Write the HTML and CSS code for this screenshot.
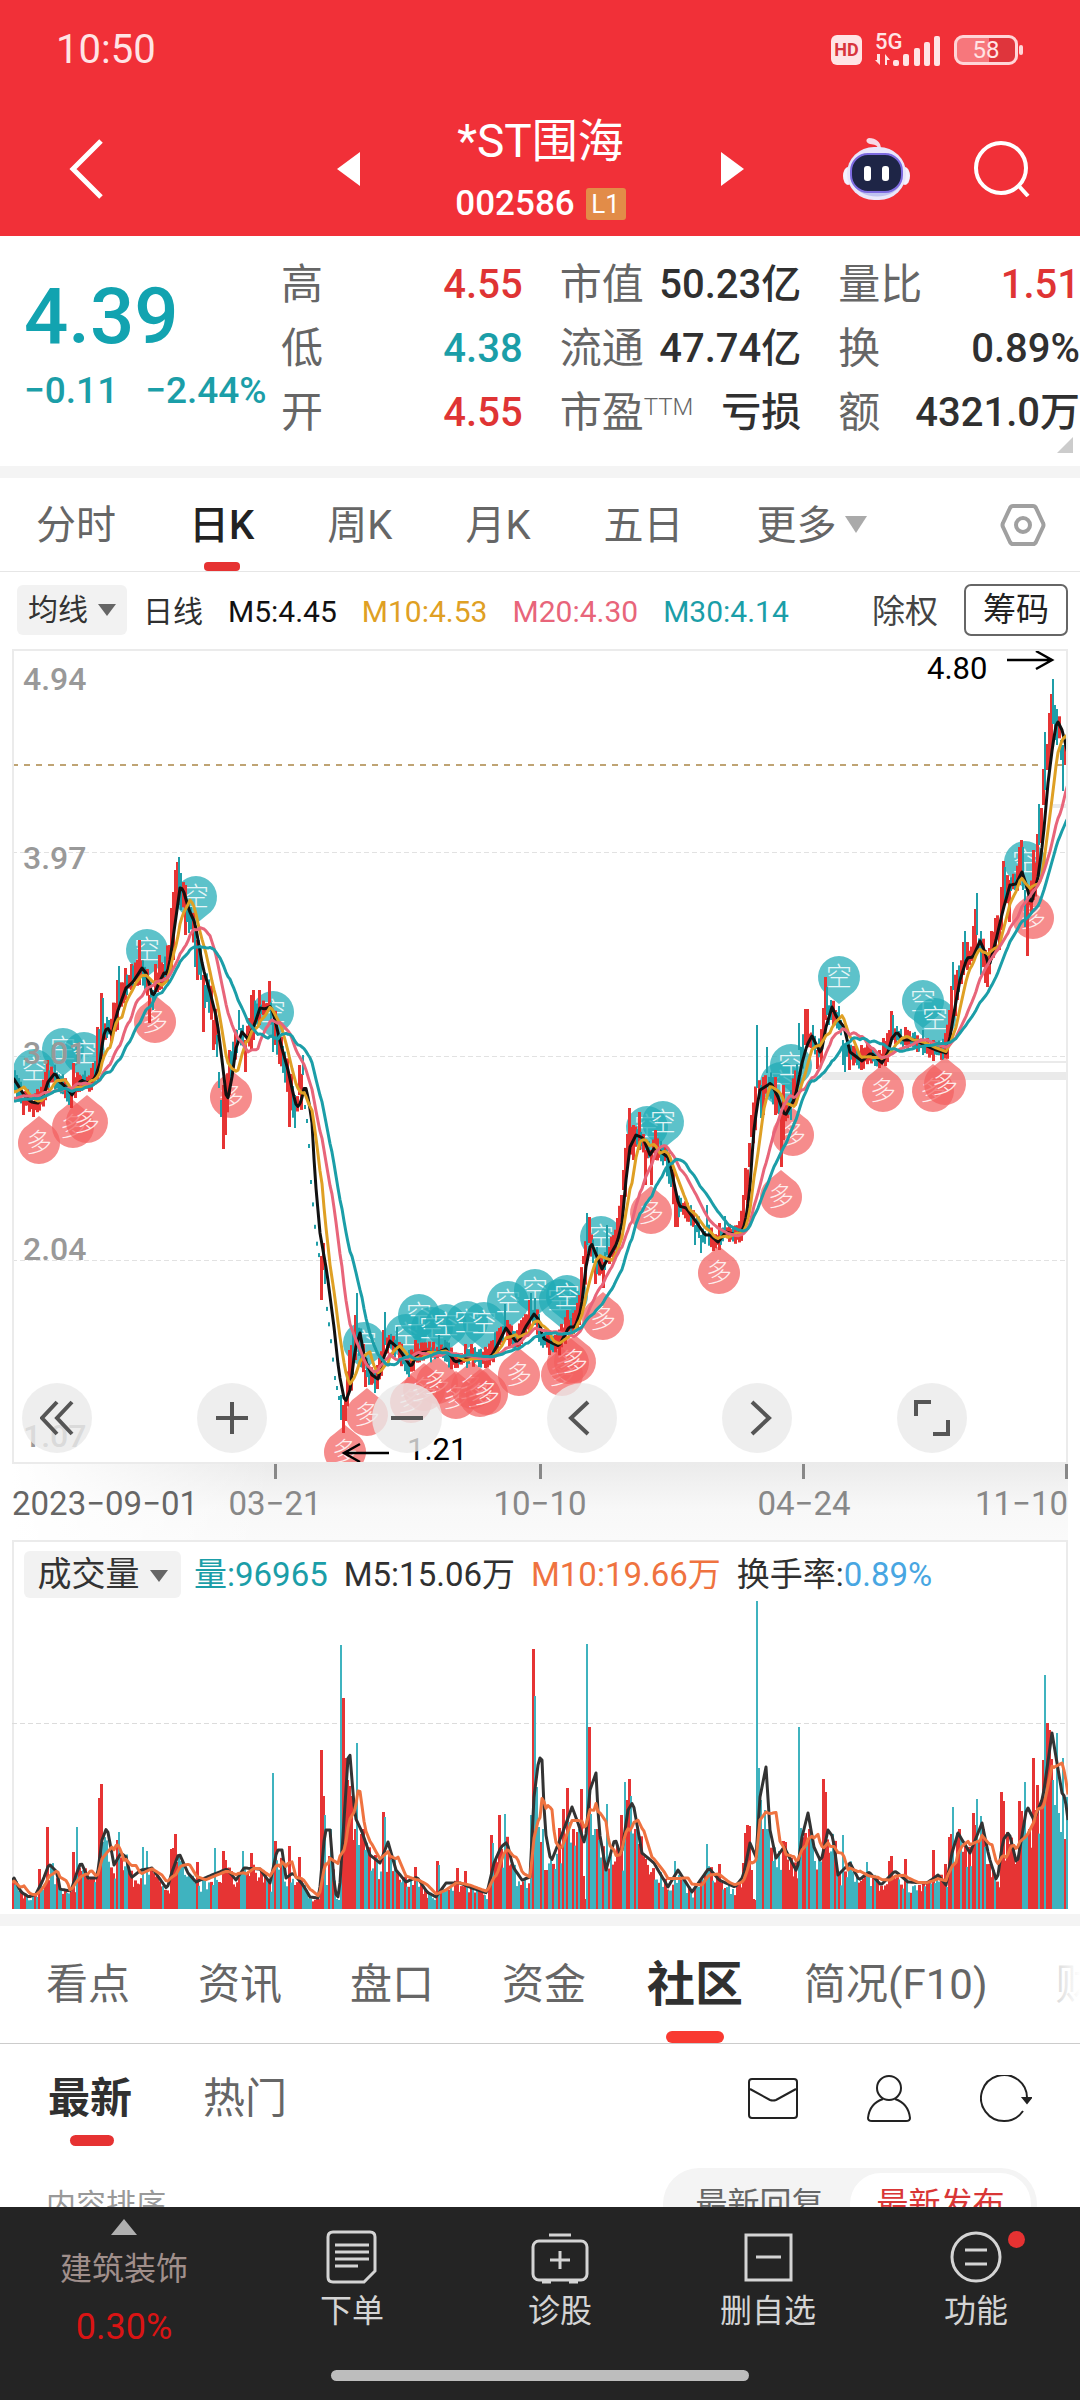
FILE: index.html
```html
<!DOCTYPE html>
<html lang="zh-CN">
<head>
<meta charset="utf-8">
<meta name="viewport" content="width=device-width, initial-scale=1">
<title>*ST围海 002586</title>
<link rel="stylesheet" href="styles.css">
</head>
<body>
<div class="app">
  <header class="top">
    <div class="status">
      <span class="clock">10:50</span>
      <span class="status-icons">
        <span class="hd">HD</span>
        <span class="cell">
          <span class="cell-gen">5G</span>
          <svg width="66" height="34" viewBox="0 0 66 34" aria-hidden="true">
            <g fill="#ffe4e5"><path d="M2 21h3v11l-5-5h2zM10 32V21l5 6h-3v5z"/><rect x="18" y="27" width="6" height="6" rx="2"/><rect x="28" y="21" width="6" height="12" rx="2"/><rect x="39" y="15" width="6" height="18" rx="2"/><rect x="49" y="9" width="6" height="24" rx="2"/><rect x="59" y="3" width="6" height="30" rx="2"/></g>
          </svg>
        </span>
        <span class="battery">58</span>
      </span>
    </div>
    <div class="titlebar">
      <div class="title-left">
        <button class="icon-btn" aria-label="返回"><svg width="36" height="62" viewBox="0 0 36 62"><path d="M32 3 4 31l28 28" fill="none" stroke="#fff" stroke-width="5"/></svg></button>
      </div>
      <div class="title-mid">
        <button class="icon-btn" aria-label="上一只"><svg width="23" height="34" viewBox="0 0 23 34"><path d="M23 0v34L0 17z" fill="#fff"/></svg></button>
        <div class="names">
          <h1 class="name">*ST围海</h1>
          <div class="code">002586 <span class="level">L1</span></div>
        </div>
        <button class="icon-btn" aria-label="下一只"><svg width="23" height="34" viewBox="0 0 23 34"><path d="M0 0v34l23-17z" fill="#fff"/></svg></button>
      </div>
      <div class="title-right">
        <button class="icon-btn" aria-label="智能助手"><svg width="67" height="62" viewBox="0 0 67 62">
          <path d="M35 12c0-6-4-5-8-6-4-1-5-5-1-6 7 0 12 4 12 11z" fill="#f7d9e6"/>
          <ellipse cx="5" cy="38" rx="5" ry="9" fill="#f4f1ff"/><ellipse cx="62" cy="38" rx="5" ry="9" fill="#f4f1ff"/>
          <rect x="4" y="9" width="59" height="53" rx="27" fill="#e9e6fb"/>
          <path d="M9 42c4 22 46 22 50 0-6 12-44 12-50 0z" fill="#bfc3f0"/>
          <rect x="8" y="16" width="51" height="38" rx="17" fill="#1e2546" stroke="#7d6be0" stroke-width="2"/>
          <rect x="21" y="28" width="7" height="15" rx="3" fill="#fff"/><rect x="39" y="28" width="7" height="15" rx="3" fill="#fff"/>
        </svg></button>
        <button class="icon-btn" aria-label="搜索"><svg width="56" height="56" viewBox="0 0 56 56"><circle cx="27" cy="27" r="25" fill="none" stroke="#fff" stroke-width="4"/><path d="m44 44 10 11" stroke="#fff" stroke-width="4"/></svg></button>
      </div>
    </div>
  </header>

  <main class="content">
    <section class="quote">
      <div class="price-block">
        <div class="price">4.39</div>
        <div class="change"><span>−0.11</span><span>−2.44%</span></div>
      </div>
      <dl class="stats">
        <div class="stat"><dt>高</dt><dd class="up">4.55</dd></div>
        <div class="stat"><dt>市值</dt><dd>50.23亿</dd></div>
        <div class="stat"><dt>量比</dt><dd class="up">1.51</dd></div>
        <div class="stat"><dt>低</dt><dd class="down">4.38</dd></div>
        <div class="stat"><dt>流通</dt><dd>47.74亿</dd></div>
        <div class="stat"><dt>换</dt><dd>0.89%</dd></div>
        <div class="stat"><dt>开</dt><dd class="up">4.55</dd></div>
        <div class="stat"><dt>市盈<sup>TTM</sup></dt><dd>亏损</dd></div>
        <div class="stat"><dt>额</dt><dd>4321.0万</dd></div>
      </dl>
      <span class="corner"></span>
    </section>

    <nav class="periods">
      <button class="period">分时</button>
      <button class="period active">日K</button>
      <button class="period">周K</button>
      <button class="period">月K</button>
      <button class="period">五日</button>
      <button class="period more">更多<span class="caret wide"></span></button>
      <button class="icon-btn gear" aria-label="设置"><svg width="46" height="44" viewBox="0 0 46 44"><path d="M13 3h20q2 0 3 2l7 15q1 2 0 4l-7 15q-1 2-3 2H13q-2 0-3-2L3 24q-1-2 0-4l7-15q1-2 3-2z" fill="none" stroke="#a0a0a0" stroke-width="4"/><circle cx="23" cy="22" r="7" fill="none" stroke="#a0a0a0" stroke-width="4"/></svg></button>
    </nav>

    <section class="indicators">
      <button class="chip">均线<span class="caret"></span></button>
      <div class="averages">
        <span class="day">日线</span>
        <span class="m5">M5:4.45</span>
        <span class="m10">M10:4.53</span>
        <span class="m20">M20:4.30</span>
        <span class="m30">M30:4.14</span>
      </div>
      <button class="plain">除权</button>
      <button class="boxed">筹码</button>
    </section>

    <section class="kline">
      <svg class="plot" id="kline" viewBox="12 649 1056 891" role="img" aria-label="日K线图">
        <defs>
          <linearGradient id="axisDown" x1="0" y1="0" x2="0" y2="1"><stop offset="0" stop-color="#ebebeb"/><stop offset="0.6" stop-color="#f8f8f8"/><stop offset="1" stop-color="#fafafa"/></linearGradient>
          <linearGradient id="axisLeft" x1="0" y1="0" x2="1" y2="0"><stop offset="0" stop-color="#fff"/><stop offset="1" stop-color="#fff" stop-opacity="0"/></linearGradient>
          <clipPath id="frame"><rect x="12" y="649" width="1056" height="815"/></clipPath>
        </defs>
      </svg>
      <div class="zoom-bar">
        <button class="round" aria-label="最早"><svg width="34" height="36" viewBox="0 0 34 36"><path d="M17 2 2 18l15 16M32 2 17 18l15 16"/></svg></button>
        <button class="round" aria-label="放大"><svg width="34" height="36" viewBox="0 0 34 36"><path d="M17 2v32M1 18h32"/></svg></button>
        <button class="round" aria-label="缩小"><svg width="34" height="36" viewBox="0 0 34 36"><path d="M1 18h32"/></svg></button>
        <button class="round" aria-label="向左"><svg width="34" height="36" viewBox="0 0 34 36"><path d="M23 2 6 18l17 16"/></svg></button>
        <button class="round" aria-label="向右"><svg width="34" height="36" viewBox="0 0 34 36"><path d="m12 2 17 16-17 16"/></svg></button>
        <button class="round" aria-label="全屏"><svg width="40" height="38" viewBox="0 0 40 38"><path d="M4 17V3h15M36 21v14H21"/></svg></button>
      </div>
    </section>

    <section class="volume">
      <div class="volume-head">
        <button class="chip chip-vol">成交量<span class="caret"></span></button>
        <div class="volume-values">
          <span class="down">量:96965</span>
          <span>M5:15.06万</span>
          <span class="orange">M10:19.66万</span>
          <span>换手率:<span class="blue">0.89%</span></span>
        </div>
      </div>
      <svg class="plot" id="volume" viewBox="12 1600 1056 309" role="img" aria-label="成交量"></svg>
    </section>

    <nav class="tabs">
      <button class="tab">看点</button>
      <button class="tab">资讯</button>
      <button class="tab">盘口</button>
      <button class="tab">资金</button>
      <button class="tab active">社区</button>
      <button class="tab">简况(F10)</button>
      <button class="tab">财务</button>
    </nav>

    <section class="feed-head">
      <button class="feed active">最新</button>
      <button class="feed">热门</button>
      <div class="feed-icons">
        <button class="icon-btn" aria-label="消息"><svg width="50" height="42" viewBox="0 0 50 42"><rect x="1" y="1" width="48" height="39" rx="3"/><path d="m2 11 20 11q3 1 6 0l20-11"/></svg></button>
        <button class="icon-btn" aria-label="我的"><svg width="44" height="48" viewBox="0 0 44 48"><circle cx="22" cy="13" r="12"/><path d="M16 24C7 27 2 34 1 43q0 3 4 3h34q4 0 4-3c-1-9-6-16-15-19"/></svg></button>
        <button class="icon-btn" aria-label="刷新"><svg width="52" height="48" viewBox="0 0 52 48"><path d="M43 36A23 23 0 1 1 47 24"/><path d="M43 23h8l-4 5z" fill="#222"/></svg></button>
      </div>
    </section>

    <section class="sorter">
      <span class="sort-label">内容排序</span>
      <div class="switch">
        <button class="option">最新回复</button>
        <button class="option chosen">最新发布</button>
      </div>
    </section>
  </main>

  <footer class="dock">
    <div class="dock-row">
      <a class="sector" href="#">
        <svg width="26" height="16" viewBox="0 0 26 16" aria-hidden="true"><path d="M13 0l13 16H0z" fill="#b0b0b0"/></svg>
        <span class="sector-name">建筑装饰</span>
        <span class="sector-change">0.30%</span>
      </a>
      <button class="dock-item"><svg width="54" height="54" viewBox="0 0 54 54"><path d="M8 2h37q5 0 5 5v34L39 52H8q-5 0-5-5V7q0-5 5-5z"/><path d="M10 15h34M10 22h34M10 29h34M10 36h23"/></svg><span>下单</span></button>
      <button class="dock-item"><svg width="60" height="54" viewBox="0 0 60 54"><rect x="3" y="11" width="54" height="39" rx="6"/><path d="M19 5h22M30 21v18M20 30h20M12 52h9M39 52h9"/></svg><span>诊股</span></button>
      <button class="dock-item"><svg width="54" height="54" viewBox="0 0 54 54"><rect x="5" y="5" width="45" height="45"/><path d="M15 27h25"/></svg><span>删自选</span></button>
      <button class="dock-item"><svg width="54" height="54" viewBox="0 0 54 54"><circle cx="27" cy="27" r="24"/><path d="M16 20h22M16 34h22"/></svg><span>功能</span><i class="dot"></i></button>
    </div>
    <div class="home"></div>
  </footer>
</div>
<script src="charts.js"></script>
</body>
</html>
```
FILE: styles.css
```css
* { box-sizing: border-box; }

body {
  margin: 0;
  font-family: Roboto, "Noto Sans CJK SC", sans-serif;
  color: #303030;
  background: #fff;
}

button {
  margin: 0;
  padding: 0;
  border: 0;
  background: none;
  font: inherit;
  color: inherit;
  white-space: nowrap;
}

svg { display: block; }
.icon-btn { flex: none; }

.app { display: flex; flex-direction: column; height: 100vh; }
.content { flex: 1; min-height: 0; overflow: hidden; }
.up { color: #df3434; }
.down { color: #1b9ea8; }
.orange { color: #ef7340; }
.blue { color: #48a6e2; }

/* header */
.top { background: #f13038; color: #fff; }
.status {
  display: flex;
  align-items: center;
  justify-content: space-between;
  padding: 30px 57px 0 56px;
  line-height: 40px;
  color: #ffe4e5;
}
.clock { font-size: 40px; }
.status-icons { display: flex; align-items: center; gap: 13px; }
.hd {
  width: 31px;
  border-radius: 6px;
  background: #ffe4e5;
  color: #d8353c;
  font-size: 18px;
  font-weight: 700;
  line-height: 30px;
  text-align: center;
}
.cell { position: relative; }
.cell-gen { position: absolute; left: 0; top: 0; font-size: 22px; font-weight: 500; line-height: 17px; }
.battery {
  position: relative;
  width: 64px;
  border: 3px solid #ffd5d7;
  border-radius: 9px;
  margin-right: 5px;
  background: linear-gradient(90deg, #f7777c 56%, #df353c 56%);
  font-size: 24px;
  line-height: 24px;
  text-align: center;
}
.battery::after {
  content: "";
  position: absolute;
  right: -8px;
  top: 7px;
  width: 4px;
  height: 10px;
  border-radius: 2px;
  background: #ffd5d7;
}
.titlebar {
  display: grid;
  grid-template-columns: 1fr 408px 1fr;
  align-items: center;
  padding: 43px 50px 12px 69px;
}
.title-left { display: flex; margin-right: 10px; }
.title-mid { display: flex; align-items: center; justify-content: space-between; position: relative; left: -9px; }
.names { text-align: center; }
.name { margin: 0; font-size: 46px; font-weight: 400; line-height: 56px; }
.code {
  display: flex;
  align-items: center;
  justify-content: center;
  gap: 11px;
  margin-top: 15px;
  font-size: 35px;
  font-weight: 500;
  line-height: 40px;
}
.level {
  width: 40px;
  border-radius: 3px;
  background: #e28c48;
  font-size: 26px;
  font-weight: 400;
  line-height: 32px;
  text-align: center;
}
.title-right { display: flex; align-items: center; justify-content: flex-end; gap: 64px; }

/* quote */
.quote { position: relative; display: flex; padding: 17px 0 21px; border-bottom: 12px solid #f4f4f4; }
.price-block { flex: none; width: 281px; padding: 22px 0 0 24px; color: #12a3b0; }
.price { font-size: 78px; font-weight: 500; line-height: 84px; }
.change {
  display: flex;
  gap: 27px;
  margin-top: 12px;
  color: #1b9ea8;
  font-size: 37px;
  font-weight: 500;
  line-height: 40px;
  white-space: nowrap;
}
.stats {
  flex: 1;
  display: grid;
  grid-template-columns: repeat(3, minmax(0, 1fr));
  column-gap: 37px;
  margin: 0;
}
.stat { display: flex; justify-content: space-between; line-height: 64px; white-space: nowrap; }
.stat dt { font-size: 42px; color: #666; }
.stat dd { margin: 0; font-size: 40px; font-weight: 500; }
.stat sup { font-size: 24px; font-weight: 300; line-height: 24px; vertical-align: 12px; }
.corner {
  position: absolute;
  right: 7px;
  bottom: 13px;
  border-left: 16px solid transparent;
  border-bottom: 16px solid #ccc;
}

/* periods */
.periods { display: flex; align-items: center; gap: 73px; padding: 0 34px 0 36px; border-bottom: 1px solid #e6e6e6; }
.period { position: relative; padding: 20px 0 17px; font-size: 40px; line-height: 56px; color: #666; }
.period.active { color: #222; font-weight: 500; }
.period.active::after {
  content: "";
  position: absolute;
  left: 50%;
  bottom: 0;
  width: 36px;
  height: 9px;
  margin-left: -18px;
  border-radius: 4px;
  background: #e63232;
}
.gear { margin-left: auto; }
.caret {
  display: inline-block;
  margin-left: 10px;
  border: 9px solid transparent;
  border-top: 12px solid #666;
  border-bottom: 0;
  vertical-align: 4px;
}
.caret.wide { margin-left: 8px; border-width: 17px 11px 0; border-top-color: #aaa; vertical-align: 6px; }

/* indicators */
.indicators { display: flex; align-items: center; padding: 12px 12px 13px 17px; font-size: 30px; line-height: 50px; }
.chip { width: 110px; border-radius: 6px; background: #f2f2f2; color: #333; font-size: 30px; line-height: 50px; }
.averages { display: flex; flex: 1; gap: 25px; margin-left: 16px; padding-top: 3px; font-size: 30px; white-space: nowrap; line-height: 47px; }
.m5 { color: #111; }
.m10 { color: #dfa024; }
.m20 { color: #e8657a; }
.m30 { color: #1b9ea8; }
.plain { padding-top: 3px; font-size: 33px; line-height: 47px; color: #444; }
.boxed { width: 104px; margin-left: 26px; border: 2px solid #666; border-radius: 7px; font-size: 33px; line-height: 48px; color: #222; }

/* charts */
.kline { position: relative; padding: 0 12px; }
.plot { width: 100%; height: auto; }
.plot text { font-size: 32px; font-weight: 500; fill: #999; }
.plot .date { fill: #888; font-size: 33px; font-weight: 400; }
.plot .date-start { fill: #666; }
.plot .extreme { fill: #000; font-size: 31px; font-weight: 400; }
.plot .mark { fill: #fff; font-size: 26px; font-weight: 300; text-anchor: middle; opacity: 0.85; }
.zoom-bar { position: absolute; left: 22px; bottom: 87px; display: flex; gap: 105px; }
.round {
  display: flex;
  align-items: center;
  justify-content: center;
  width: 70px;
  height: 70px;
  border-radius: 50%;
  background: rgba(234, 234, 234, 0.8);
}
.round path { fill: none; stroke: #555; stroke-width: 4; }

.volume { margin: 0 12px 5px; box-shadow: inset 0 0 0 2px #ebebeb; }
.volume-head { display: flex; align-items: center; padding: 11px 12px 2px; }
.chip-vol { width: 157px; font-size: 34px; line-height: 47px; }
.volume-values { display: flex; gap: 16px; margin-left: 13px; font-size: 33px; line-height: 47px; white-space: nowrap; }

/* tabs */
.tabs {
  position: relative;
  display: flex;
  gap: 68px;
  overflow: hidden;
  padding-left: 46px;
  border-top: 12px solid #f4f4f4;
  border-bottom: 1px solid #ccc;
}
.tab { position: relative; flex: none; padding: 29px 0 28px; font-size: 42px; line-height: 60px; color: #666; }
.tab.active { margin: 0 -7px; font-size: 48px; font-weight: 700; color: #303030; }
.tab.active::after,
.feed.active::after {
  content: "";
  position: absolute;
  left: 50%;
  bottom: 0;
  width: 58px;
  height: 12px;
  margin-left: -29px;
  border-radius: 6px;
  background: #f93a31;
}
.tabs::after {
  content: "";
  position: absolute;
  right: 0;
  top: 0;
  bottom: 0;
  width: 60px;
  background: linear-gradient(90deg, rgba(255, 255, 255, 0.4), #fff);
}

/* feed */
.feed-head { display: flex; align-items: flex-start; gap: 71px; padding: 25px 48px 0; }
.feed { position: relative; padding-bottom: 17px; font-size: 42px; line-height: 60px; color: #666; }
.feed.active { font-weight: 700; color: #303030; }
.feed.active::after { width: 44px; height: 11px; margin-left: -20px; background: #e63232; }
.feed-icons { display: flex; flex: 1; align-items: center; justify-content: flex-end; gap: 69px; height: 60px; }
.feed-icons svg { fill: none; stroke: #222; stroke-width: 2; }
.sorter { display: flex; justify-content: space-between; margin: 22px 43px 0 46px; line-height: 62px; }
.sort-label { padding-top: 6px; font-size: 30px; color: #999; }
.switch { display: flex; padding: 5px 6px; border-radius: 36px; background: #f4f4f4; font-size: 32px; }
.option { width: 181px; border-radius: 31px; color: #666; }
.option.chosen { background: #fff; color: #d93636; }

/* dock */
.dock { flex: none; padding: 12px 0 19px; background: #242424; color: #d4d4d4; }
.dock-row { display: flex; }
.sector {
  display: flex;
  flex-direction: column;
  align-items: center;
  width: 248px;
  font-size: 32px;
  line-height: 40px;
  text-decoration: none;
}
.sector-name { margin-top: 14px; color: #a08f8b; }
.sector-change { margin-top: 18px; color: #da1414; font-size: 36px; }
.dock-item {
  position: relative;
  display: flex;
  flex: 1;
  flex-direction: column;
  align-items: center;
  gap: 7px;
  padding-top: 11px;
  font-size: 32px;
  line-height: 40px;
}
.dock-item svg { fill: none; stroke: #d4d4d4; stroke-width: 3; }
.dot { position: absolute; left: 50%; top: 12px; width: 17px; height: 17px; margin-left: 32px; border-radius: 50%; background: #e63232; }
.home { width: 418px; height: 11px; margin: 23px auto 0; border-radius: 6px; background: #bdbdbd; }
```
FILE: charts.js
```javascript
var NS = "http://www.w3.org/2000/svg";
var LEFT = 12, STEP = 2, COUNT = 528, BASE = 1909;
var UP = "#e63434", DOWN = "#1f9ea8";

// Five-day average price, as x,y pairs
var price = [-60,1108, 5,1104, 14,1079, 24,1095, 31,1102, 38,1103, 43,1097, 48,1082, 55,1073, 60,1082, 67,1088, 72,1095, 81,1080, 88,1083, 95,1078, 100,1063, 103,1037, 107,1027, 112,1035, 117,1013, 126,988, 133,982, 142,968, 146,973, 153,997, 159,983, 164,973, 167,974, 170,960, 176,917, 180,888, 183,889, 189,910, 195,923, 203,968, 210,992, 217,1020, 222,1060, 227,1103, 232,1077, 236,1048, 242,1032, 248,1039, 255,1023, 260,1008, 265,1009, 271,1006, 275,1020, 281,1045, 288,1070, 293,1093, 297,1108, 301,1102, 305,1084, 309,1102, 312,1123, 315,1177, 320,1233, 327,1273, 334,1327, 339,1373, 345,1403, 350,1390, 355,1350, 360,1333, 365,1360, 372,1375, 378,1379, 384,1357, 390,1341, 398,1348, 405,1358, 411,1367, 418,1353, 427,1352, 436,1353, 446,1349, 455,1362, 465,1359, 475,1358, 486,1359, 492,1355, 499,1342, 506,1328, 511,1335, 518,1344, 525,1328, 534,1314, 539,1320, 543,1338, 550,1342, 559,1346, 569,1327, 575,1327, 581,1310, 586,1267, 591,1242, 595,1252, 602,1269, 609,1257, 617,1243, 622,1223, 626,1180, 630,1147, 636,1135, 643,1138, 650,1155, 655,1147, 661,1152, 669,1158, 674,1183, 679,1206, 686,1208, 697,1223, 705,1235, 710,1235, 718,1242, 726,1232, 736,1235, 743,1230, 747,1213, 751,1177, 753,1137, 757,1107, 760,1090, 771,1083, 778,1097, 785,1116, 795,1098, 802,1063, 807,1045, 812,1036, 821,1054, 826,1027, 832,1007, 837,1018, 844,1027, 850,1052, 862,1061, 871,1053, 882,1063, 888,1052, 892,1038, 897,1032, 903,1040, 915,1040, 929,1047, 936,1050, 946,1053, 950,1037, 955,1007, 960,980, 967,958, 973,957, 980,941, 985,952, 989,967, 996,940, 1003,910, 1010,885, 1016,884, 1022,872, 1027,887, 1031,905, 1038,877, 1043,840, 1048,783, 1053,743, 1057,720, 1062,730, 1068,754];

// Wide-range days: x, high, low, 1 for a rise
var candles = [13,1070,1088,0, 23,1100,1115,1, 33,1103,1117,1, 47,1060,1090,1, 69,1085,1105,0, 71,1090,1108,1, 73,1063,1095,1, 97,1027,1080,1, 101,993,1060,1, 103,998,1050,0, 117,980,1030,1, 119,966,1010,0, 125,968,1000,1, 131,964,990,1, 139,940,985,1, 149,995,1023,1, 153,990,1010,0, 155,964,990,1, 159,955,990,1, 169,945,975,1, 171,908,970,1, 173,892,960,1, 175,870,920,1, 177,862,905,1, 179,857,905,0, 181,873,910,0, 185,885,935,1, 189,900,933,0, 195,930,967,0, 197,940,980,1, 203,975,1032,1, 205,985,1008,0, 213,1020,1050,1, 217,1035,1057,0, 219,1072,1088,0, 221,1100,1117,0, 223,1085,1149,1, 225,1080,1135,1, 229,1050,1095,1, 239,1010,1030,0, 245,1040,1072,1, 251,995,1050,1, 253,990,1040,1, 259,990,1025,1, 269,981,1010,1, 273,1020,1052,0, 279,1040,1064,1, 289,1080,1127,1, 295,1095,1128,0, 299,1065,1095,1, 303,1055,1075,0, 321,1256,1300,1, 323,1243,1270,1, 325,1265,1284,0, 341,1395,1420,0, 343,1405,1433,1, 345,1400,1421,1, 349,1350,1390,1, 355,1315,1360,1, 357,1293,1340,0, 365,1370,1387,1, 375,1370,1393,0, 377,1365,1389,1, 385,1312,1345,0, 383,1330,1360,1, 397,1327,1350,0, 408,1350,1377,0, 415,1340,1358,1, 439,1335,1355,0, 465,1344,1362,1, 471,1344,1360,1, 499,1328,1345,1, 505,1304,1330,0, 507,1320,1340,1, 529,1300,1330,1, 531,1293,1320,0, 535,1298,1325,0, 549,1335,1355,1, 567,1310,1330,1, 579,1295,1325,1, 583,1256,1264,1, 587,1213,1245,0, 589,1217,1243,1, 595,1262,1284,1, 602,1262,1288,1, 607,1225,1255,0, 617,1218,1240,1, 621,1195,1225,1, 623,1170,1190,1, 627,1134,1160,1, 629,1108,1150,1, 633,1125,1160,1, 639,1112,1150,1, 645,1150,1185,1, 651,1150,1185,1, 654,1130,1160,1, 670,1160,1187,0, 675,1195,1227,1, 677,1200,1227,1, 695,1225,1245,0, 701,1235,1253,0, 707,1205,1230,0, 713,1235,1251,1, 719,1223,1250,1, 725,1216,1232,0, 743,1195,1225,1, 745,1168,1200,1, 749,1143,1167,1, 751,1115,1137,1, 757,1025,1088,0, 761,1085,1118,0, 763,1077,1115,1, 766,1047,1073,0, 775,1077,1115,1, 781,1115,1167,1, 783,1085,1140,1, 791,1090,1120,0, 799,1023,1050,0, 805,1009,1045,1, 807,1009,1045,1, 813,1025,1050,0, 817,1050,1069,1, 823,1008,1040,1, 825,977,1020,1, 827,987,1015,0, 831,1000,1020,0, 839,1006,1030,0, 843,1040,1065,0, 845,1045,1072,0, 849,1050,1070,1, 861,1045,1070,1, 879,1050,1068,1, 883,1038,1060,1, 889,1030,1050,1, 891,1011,1040,1, 893,1015,1040,0, 905,1027,1045,1, 923,1030,1055,0, 933,1040,1061,1, 949,1010,1045,1, 951,986,1030,1, 953,962,990,0, 957,970,1000,1, 963,942,975,1, 965,931,962,0, 967,942,970,1, 973,926,960,1, 975,909,950,1, 977,893,935,0, 981,931,975,0, 985,950,983,1, 987,962,987,1, 991,931,960,1, 999,922,950,1, 1001,887,930,1, 1003,861,905,1, 1005,867,900,0, 1009,880,922,1, 1019,847,885,1, 1021,840,880,1, 1023,847,890,0, 1025,890,927,0, 1027,900,956,1, 1033,850,900,1, 1037,834,875,1, 1039,804,845,0, 1041,808,843,1, 1043,769,805,1, 1045,732,790,0, 1047,744,770,1, 1049,713,770,1, 1051,694,750,1, 1053,679,724,0, 1055,705,740,0, 1057,709,745,0, 1061,740,760,0, 1063,745,791,0, 1065,745,765,1, 1067,730,765,0];

var shortMarks = [34,1070, 63,1049, 84,1053, 147,950, 196,897, 273,1012, 364,1343, 406,1335, 419,1315, 432,1328, 446,1325, 467,1322, 484,1323, 508,1302, 535,1290, 560,1300, 567,1296, 601,1237, 647,1127, 663,1122, 781,1083, 791,1065, 839,977, 923,1001, 935,1019, 1025,862];
var longMarks = [39,1143, 73,1127, 87,1122, 155,1022, 231,1097, 345,1452, 367,1415, 411,1402, 424,1390, 437,1383, 456,1398, 472,1388, 480,1396, 487,1394, 519,1375, 562,1375, 568,1363, 575,1362, 603,1319, 651,1213, 719,1273, 781,1197, 793,1135, 883,1091, 933,1091, 945,1084, 1033,918];

// Five-day average volume, as x,y pairs
var volume = [-60,1885, 10,1884, 14,1878, 21,1892, 29,1897, 36,1894, 43,1880, 49,1864, 57,1872, 60,1889, 71,1891, 76,1875, 81,1862, 88,1878, 97,1878, 102,1840, 107,1827, 114,1865, 121,1853, 126,1857, 131,1878, 141,1870, 152,1868, 167,1889, 172,1872, 179,1853, 188,1873, 196,1882, 207,1877, 227,1869, 236,1880, 244,1868, 260,1869, 270,1883, 277,1850, 282,1850, 286,1878, 293,1873, 303,1885, 310,1897, 319,1898, 325,1830, 330,1830, 335,1893, 339,1898, 344,1820, 349,1743, 355,1817, 362,1832, 370,1855, 380,1863, 388,1842, 396,1870, 406,1882, 417,1877, 427,1892, 436,1897, 446,1883, 460,1883, 472,1888, 487,1893, 494,1863, 501,1847, 507,1842, 513,1867, 522,1880, 530,1877, 534,1797, 539,1757, 542,1760, 545,1830, 551,1862, 561,1837, 572,1807, 578,1823, 585,1845, 590,1790, 596,1773, 599,1830, 606,1870, 615,1838, 621,1857, 628,1810, 633,1802, 642,1853, 654,1863, 668,1887, 678,1870, 692,1892, 709,1868, 719,1880, 735,1887, 743,1877, 750,1843, 756,1857, 760,1797, 766,1767, 770,1830, 776,1858, 784,1847, 797,1872, 802,1837, 808,1813, 814,1847, 821,1862, 828,1830, 833,1837, 838,1875, 850,1863, 859,1880, 869,1872, 881,1885, 895,1871, 908,1882, 927,1883, 938,1875, 946,1885, 952,1853, 958,1833, 970,1853, 982,1823, 989,1857, 997,1882, 1003,1840, 1009,1832, 1017,1865, 1027,1806, 1034,1820, 1043,1797, 1052,1733, 1062,1793, 1065,1797, 1068,1820];

// Heavy-volume days: x, top, 1 for a rise
var spikes = [39,1869,1, 47,1827,1, 73,1852,1, 77,1827,0, 99,1798,1, 101,1784,1, 103,1842,0, 117,1840,1, 119,1832,0, 143,1847,0, 147,1851,0, 171,1849,1, 173,1848,1, 175,1834,1, 177,1862,1, 197,1862,1, 215,1848,0, 223,1851,1, 225,1860,1, 243,1851,0, 251,1853,1, 273,1773,0, 275,1841,1, 289,1846,1, 299,1857,1, 321,1750,1, 323,1796,1, 325,1815,0, 327,1885,0, 337,1899,0, 341,1645,0, 343,1698,1, 345,1758,1, 347,1780,1, 349,1786,1, 351,1796,1, 353,1840,1, 357,1743,0, 361,1834,1, 365,1850,0, 383,1812,1, 385,1817,0, 415,1867,1, 437,1861,1, 439,1865,0, 457,1868,1, 465,1871,1, 491,1835,1, 493,1843,0, 499,1815,1, 505,1814,0, 531,1815,0, 533,1649,1, 535,1696,0, 537,1787,0, 539,1827,0, 541,1842,1, 545,1870,1, 547,1870,1, 559,1828,1, 563,1809,1, 567,1788,1, 569,1822,0, 577,1832,1, 581,1789,1, 583,1876,1, 585,1899,1, 587,1644,0, 589,1727,1, 591,1814,0, 593,1835,0, 607,1804,0, 621,1815,1, 625,1782,0, 627,1800,1, 629,1779,1, 631,1796,0, 639,1844,1, 675,1861,0, 707,1844,0, 719,1864,1, 743,1863,1, 745,1833,1, 747,1825,1, 749,1826,1, 751,1870,1, 753,1899,1, 755,1900,1, 757,1601,0, 759,1768,0, 761,1800,0, 765,1810,0, 783,1841,1, 799,1727,0, 801,1828,0, 805,1833,1, 823,1779,1, 825,1792,1, 843,1835,0, 867,1862,0, 889,1861,1, 891,1856,1, 905,1859,1, 933,1850,1, 945,1864,1, 949,1837,1, 951,1834,1, 953,1807,0, 957,1833,1, 973,1813,1, 975,1825,1, 977,1799,0, 981,1816,0, 1001,1792,1, 1003,1801,1, 1009,1844,1, 1019,1801,1, 1021,1811,1, 1025,1782,0, 1033,1758,1, 1035,1810,1, 1037,1785,1, 1041,1800,1, 1043,1760,1, 1045,1675,0, 1047,1723,1, 1049,1730,1, 1051,1759,1, 1053,1780,0, 1055,1805,0, 1057,1733,0, 1059,1813,0, 1061,1832,0, 1063,1758,0, 1065,1839,1, 1067,1797,0];

var seed = 7;
function rand() {
  seed = (seed * 16807) % 2147483647;
  return seed / 2147483647;
}

function at(line, x) {
  for (var i = 2; i < line.length; i += 2) {
    if (x <= line[i]) {
      var t = (x - line[i - 2]) / (line[i] - line[i - 2]);
      return line[i - 1] + t * (line[i + 1] - line[i - 1]);
    }
  }
  return line[line.length - 1];
}

// A longer average is the mean of the five-day average at five-day steps
function longer(line, x, weeks) {
  var sum = 0;
  for (var k = 0; k < weeks; k++) sum += at(line, x - k * 10);
  return sum / weeks;
}

function add(parent, name, attrs, text) {
  var node = document.createElementNS(NS, name);
  for (var key in attrs) node.setAttribute(key, attrs[key]);
  if (text) node.textContent = text;
  parent.appendChild(node);
  return node;
}

function trace(parent, line, weeks, color) {
  var points = [];
  for (var x = LEFT; x <= 1068; x += STEP) points.push(x + "," + longer(line, x, weeks).toFixed(1));
  add(parent, "polyline", { points: points.join(" "), fill: "none", stroke: color, "stroke-width": 3, "stroke-linejoin": "round" });
}

function rule(parent, y, color, dash, width) {
  add(parent, "line", { x1: 12, x2: 1068, y1: y, y2: y, stroke: color, "stroke-width": width, "stroke-dasharray": dash });
}

function bar(parent, i, top, bottom, rise, down) {
  add(parent, "rect", { x: LEFT + i * STEP, y: top.toFixed(1), width: rise ? STEP + 1 : STEP, height: (bottom - top).toFixed(1), fill: rise ? UP : down });
}

function drawPrice() {
  var root = document.getElementById("kline");
  var svg = add(root, "g", { "clip-path": "url(#frame)" });
  add(svg, "rect", { x: 822, y: 1072, width: 246, height: 8, fill: "#eaeaea" });
  add(svg, "rect", { x: 885, y: 1061, width: 183, height: 2, fill: "#eaeaea" });
  add(svg, "rect", { x: 1053, y: 804, width: 15, height: 4, fill: "#eaeaea" });
  [852, 1056, 1260].forEach(function (y) { rule(svg, y + 0.5, "#e2e2e2", "5 3", 1); });
  rule(svg, 765, "#bfa474", "6 6", 2);

  function pins(list, glyph, color, dir) {
    for (var i = 0; i < list.length; i += 2) {
      var x = list[i], y = list[i + 1];
      var tip = y + 27 * dir, neck = y + 18 * dir;
      add(svg, "path", {
        d: "M" + (x - 11) + " " + neck + "A21 21 0 1 " + (dir > 0 ? 1 : 0) + " " + (x + 11) + " " + neck + "L" + x + " " + tip + "z",
        fill: color, opacity: 0.72
      });
      add(svg, "text", { x: x, y: y + 9, "class": "mark" }, glyph);
    }
  }
  pins(longMarks, "多", "#f3605f", -1);
  pins(shortMarks, "空", "#1fabb5", 1);

  var wide = {};
  for (var k = 0; k < candles.length; k += 4) wide[Math.floor((candles[k] - LEFT) / STEP)] = candles.slice(k + 1, k + 4);
  for (var i = 0; i < COUNT; i++) {
    var x = LEFT + i * STEP;
    if (wide[i]) {
      bar(svg, i, wide[i][0], wide[i][1], wide[i][2], DOWN);
      continue;
    }
    var close = at(price, x + 5), open = at(price, x + 1);
    if (x > 303 && x < 342) {
      bar(svg, i, close + 3, close + 7, false, DOWN);
      continue;
    }
    var rise = close < open ? rand() > 0.2 : rand() > 0.65;
    var reach = 3 + rand() * 8;
    bar(svg, i, Math.min(open, close) - reach, Math.max(open, close) + 3 + rand() * 7, rise, DOWN);
  }
  trace(svg, price, 1, "#111");
  trace(svg, price, 2, "#dfa024");
  trace(svg, price, 4, "#e8657a");
  trace(svg, price, 6, "#1b9ea8");

  add(svg, "path", { d: "M1007 660h45M1036 651l16 9-16 9M389 1453h-45M360 1444l-16 9 16 9", fill: "none", stroke: "#000", "stroke-width": 2.5 });
  add(svg, "text", { x: 927, y: 679, "class": "extreme" }, "4.80");
  add(svg, "text", { x: 407, y: 1460, "class": "extreme" }, "1.21");
  [["4.94", 690], ["3.97", 869], ["3.01", 1064], ["2.04", 1260], ["1.07", 1447]].forEach(function (t) {
    add(svg, "text", { x: 23, y: t[1] }, t[0]);
  });

  add(root, "rect", { x: 12, y: 1464, width: 1056, height: 76, fill: "url(#axisDown)" });
  add(root, "rect", { x: 12, y: 1464, width: 260, height: 76, fill: "url(#axisLeft)" });
  add(root, "rect", { x: 13, y: 650, width: 1054, height: 813, fill: "none", stroke: "#ebebeb", "stroke-width": 2 });
  [275, 540, 803, 1066].forEach(function (x) {
    add(root, "rect", { x: x - 1, y: 1464, width: 3, height: 15, fill: "#888" });
  });
  add(root, "text", { x: 12, y: 1515, "class": "date date-start" }, "2023−09−01");
  [["03−21", 275], ["10−10", 540], ["04−24", 804]].forEach(function (t) {
    add(root, "text", { x: t[1], y: 1515, "class": "date", "text-anchor": "middle" }, t[0]);
  });
  add(root, "text", { x: 1068, y: 1515, "class": "date", "text-anchor": "end" }, "11−10");
}

function drawVolume() {
  var svg = document.getElementById("volume");
  rule(svg, 1723.5, "#dcdcdc", "5 3", 1);
  var heavy = {};
  for (var k = 0; k < spikes.length; k += 3) heavy[Math.floor((spikes[k] - LEFT) / STEP)] = spikes.slice(k + 1, k + 3);
  for (var i = 0; i < COUNT; i++) {
    if (heavy[i]) {
      bar(svg, i, heavy[i][0], BASE, heavy[i][1], "#3fb3bf");
      continue;
    }
    var x = LEFT + i * STEP;
    var mean = BASE - at(volume, x);
    var rise = at(price, x + 5) < at(price, x + 1) ? rand() > 0.25 : rand() > 0.65;
    bar(svg, i, BASE - Math.min(mean * (0.6 + rand() * 0.5), 80), BASE, rise, "#3fb3bf");
  }
  trace(svg, volume, 1, "#333");
  trace(svg, volume, 2, "#ef7340");
}

drawPrice();
drawVolume();
```
